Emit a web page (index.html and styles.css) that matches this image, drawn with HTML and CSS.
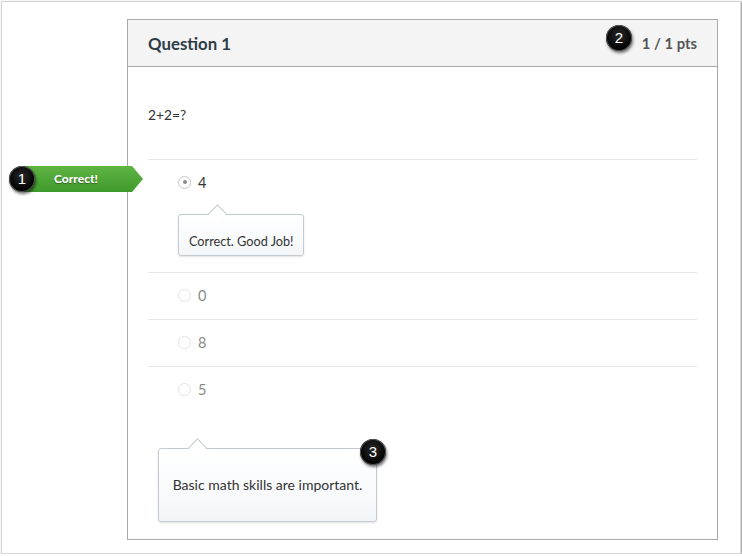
FILE: index.html
```html
<!DOCTYPE html>
<html lang="en">
<head>
    <meta charset="UTF-8">
    <title>Quiz Results</title>
    <link rel="stylesheet" href="styles.css">
</head>
<body>
    <div class="frame">
        <div class="question">
            <div class="question-header">
                <span class="question-name">Question 1</span>
                <span class="points"><span class="badge badge-pts">2</span>1 / 1 pts</span>
            </div>
            <div class="question-body">
                <p class="question-text">2+2=?</p>
                <div class="answers">
                    <div class="answer selected">
                        <div class="flag">Correct!</div>
                        <span class="badge badge-flag">1</span>
                        <label class="answer-label"><span class="radio"></span>4</label>
                        <div class="tip tip-answer">Correct. Good Job!</div>
                    </div>
                    <div class="answer">
                        <label class="answer-label"><span class="radio"></span>0</label>
                    </div>
                    <div class="answer">
                        <label class="answer-label"><span class="radio"></span>8</label>
                    </div>
                    <div class="answer">
                        <label class="answer-label"><span class="radio"></span>5</label>
                    </div>
                </div>
                <div class="tip tip-general">
                    Basic math skills are important.
                    <span class="badge badge-tip">3</span>
                </div>
            </div>
        </div>
    </div>
</body>
</html>
```

FILE: styles.css
```css
body {
    margin: 0;
    background: #fff;
    font-family: Lato, "Open Sans", sans-serif;
    color: #333;
}
.frame {
    box-sizing: border-box;
    width: 740px;
    height: 553px;
    margin: 1px 0 0 1px;
    border: 1px solid #d6d6d6;
    box-shadow: 1px 1px 2px #8a8a8a;
    padding: 17px 0 0 125px;
    position: relative;
}
.question {
    box-sizing: border-box;
    width: 591px;
    height: 521px;
    border: 1px solid #a9a9a9;
}
.question-header {
    height: 46px;
    background: #f4f4f4;
    border-bottom: 1px solid #a9a9a9;
    display: flex;
    align-items: center;
    justify-content: space-between;
    padding: 0 20px;
}
.question-name {
    font-size: 16.8px;
    font-weight: bold;
    color: #2d3b45;
}
.points {
    position: relative;
    font-size: 14.8px;
    font-weight: bold;
    color: #555;
}
.question-body {
    padding: 0 20px;
}
.question-text {
    margin: 39px 0 35px;
    font-size: 13.8px;
    line-height: 18px;
}
.answer {
    position: relative;
    border-top: 1px solid #e6e6e6;
    padding: 12px 0 14px;
}
.answer:last-child {
    padding-bottom: 13px;
}
.answer-label {
    display: flex;
    align-items: center;
    gap: 7px;
    padding-left: 30px;
    height: 20px;
    font-size: 14.5px;
    color: #8a8a8a;
}
.selected .answer-label {
    color: #333;
}
.radio {
    box-sizing: border-box;
    width: 13px;
    height: 13px;
    border-radius: 50%;
    border: 1px solid #e2e2e2;
    display: flex;
    align-items: center;
    justify-content: center;
}
.selected .radio {
    border-color: #c6c6c6;
}
.selected .radio::after {
    content: "";
    width: 4px;
    height: 4px;
    border-radius: 50%;
    background: #8c8c8c;
}
.tip {
    position: relative;
    box-sizing: border-box;
    border: 1px solid #c4cad2;
    border-radius: 3px;
    background: linear-gradient(#fff, #f3f6f9);
    box-shadow: 0 1px 2px rgba(0,0,0,0.12);
    color: #333;
}
.tip::before {
    content: "";
    position: absolute;
    top: -8px;
    left: 32px;
    width: 13px;
    height: 13px;
    background: #fff;
    border-top: 1px solid #c4cad2;
    border-left: 1px solid #c4cad2;
    box-sizing: border-box;
    transform: rotate(45deg);
}
.tip-answer {
    display: inline-block;
    margin: 22px 0 2px 30px;
    padding: 18px 10px 6px;
    font-size: 12.7px;
    line-height: 16px;
}
.tip-general {
    width: 219px;
    margin: 36px 0 0 10px;
    padding: 27px 0;
    font-size: 14px;
    line-height: 18px;
    text-align: center;
}
.flag {
    position: absolute;
    top: 6px;
    left: -126px;
    box-sizing: border-box;
    width: 121px;
    height: 26px;
    padding: 0 13px 0 0;
    background: linear-gradient(#5fb443, #3f9a2c);
    clip-path: polygon(0 0, 110px 0, 121px 50%, 110px 100%, 0 100%);
    color: #fff;
    font-size: 12px;
    font-weight: 900;
    line-height: 26px;
    text-align: center;
    text-shadow: 0 1px 1px rgba(0,0,0,0.4);
}
.badge {
    position: absolute;
    width: 26px;
    height: 26px;
    border-radius: 50%;
    background: radial-gradient(circle at 50% 40%, #2a2a2a, #000 70%);
    box-shadow: 1px 2px 3px rgba(0,0,0,0.55), inset 0 0 0 1px #555;
    color: #fff;
    font-family: "Liberation Sans", Arial, sans-serif;
    font-size: 15px;
    font-weight: normal;
    line-height: 26px;
    text-align: center;
}
.badge-pts {
    right: calc(100% + 10px);
    top: -9px;
}
.badge-tip {
    left: 201px;
    top: -10px;
}
.badge-flag {
    left: -139px;
    top: 6px;
}
```
